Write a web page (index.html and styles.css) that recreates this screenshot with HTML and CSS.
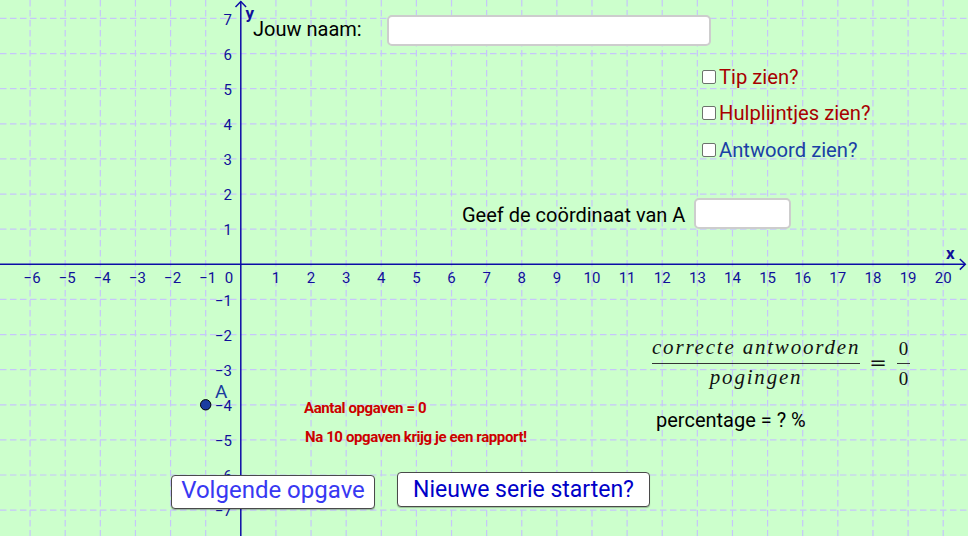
FILE: index.html
```html
<!DOCTYPE html>
<html lang="nl">
<head>
<meta charset="utf-8">
<title>Coördinaten</title>
<link rel="stylesheet" href="styles.css">
</head>
<body>
<div class="applet">
  <svg class="plane" width="968" height="536" viewBox="0 0 968 536" xmlns="http://www.w3.org/2000/svg">
    <g class="grid">
      <line x1="30.08" y1="0" x2="30.08" y2="536"/>
      <line x1="65.2" y1="0" x2="65.2" y2="536"/>
      <line x1="100.32" y1="0" x2="100.32" y2="536"/>
      <line x1="135.44" y1="0" x2="135.44" y2="536"/>
      <line x1="170.56" y1="0" x2="170.56" y2="536"/>
      <line x1="205.68" y1="0" x2="205.68" y2="536"/>
      <line x1="275.92" y1="0" x2="275.92" y2="536"/>
      <line x1="311.04" y1="0" x2="311.04" y2="536"/>
      <line x1="346.16" y1="0" x2="346.16" y2="536"/>
      <line x1="381.28" y1="0" x2="381.28" y2="536"/>
      <line x1="416.4" y1="0" x2="416.4" y2="536"/>
      <line x1="451.52" y1="0" x2="451.52" y2="536"/>
      <line x1="486.64" y1="0" x2="486.64" y2="536"/>
      <line x1="521.76" y1="0" x2="521.76" y2="536"/>
      <line x1="556.88" y1="0" x2="556.88" y2="536"/>
      <line x1="592" y1="0" x2="592" y2="536"/>
      <line x1="627.12" y1="0" x2="627.12" y2="536"/>
      <line x1="662.24" y1="0" x2="662.24" y2="536"/>
      <line x1="697.36" y1="0" x2="697.36" y2="536"/>
      <line x1="732.48" y1="0" x2="732.48" y2="536"/>
      <line x1="767.6" y1="0" x2="767.6" y2="536"/>
      <line x1="802.72" y1="0" x2="802.72" y2="536"/>
      <line x1="837.84" y1="0" x2="837.84" y2="536"/>
      <line x1="872.96" y1="0" x2="872.96" y2="536"/>
      <line x1="908.08" y1="0" x2="908.08" y2="536"/>
      <line x1="943.2" y1="0" x2="943.2" y2="536"/>
      <line x1="0" y1="18.46" x2="968" y2="18.46"/>
      <line x1="0" y1="53.58" x2="968" y2="53.58"/>
      <line x1="0" y1="88.7" x2="968" y2="88.7"/>
      <line x1="0" y1="123.82" x2="968" y2="123.82"/>
      <line x1="0" y1="158.94" x2="968" y2="158.94"/>
      <line x1="0" y1="194.06" x2="968" y2="194.06"/>
      <line x1="0" y1="229.18" x2="968" y2="229.18"/>
      <line x1="0" y1="299.42" x2="968" y2="299.42"/>
      <line x1="0" y1="334.54" x2="968" y2="334.54"/>
      <line x1="0" y1="369.66" x2="968" y2="369.66"/>
      <line x1="0" y1="404.78" x2="968" y2="404.78"/>
      <line x1="0" y1="439.9" x2="968" y2="439.9"/>
      <line x1="0" y1="475.02" x2="968" y2="475.02"/>
      <line x1="0" y1="510.14" x2="968" y2="510.14"/>
    </g>
    <g class="axes">
      <line x1="0" y1="264.3" x2="965" y2="264.3"/>
      <line x1="240.8" y1="536" x2="240.8" y2="1.5"/>
      <polyline points="959.8,259 965.3,264.3 959.8,269.6"/>
      <polyline points="235.5,7 240.8,1.5 246.1,7"/>
    </g>
    <g class="ticks-x">
      <text x="32.1" y="283">−6</text>
      <text x="67.2" y="283">−5</text>
      <text x="102.3" y="283">−4</text>
      <text x="137.4" y="283">−3</text>
      <text x="172.6" y="283">−2</text>
      <text x="207.7" y="283">−1</text>
      <text x="229" y="283">0</text>
      <text x="275.9" y="283">1</text>
      <text x="311" y="283">2</text>
      <text x="346.2" y="283">3</text>
      <text x="381.3" y="283">4</text>
      <text x="416.4" y="283">5</text>
      <text x="451.5" y="283">6</text>
      <text x="486.6" y="283">7</text>
      <text x="521.8" y="283">8</text>
      <text x="556.9" y="283">9</text>
      <text x="592" y="283">10</text>
      <text x="627.1" y="283">11</text>
      <text x="662.2" y="283">12</text>
      <text x="697.4" y="283">13</text>
      <text x="732.5" y="283">14</text>
      <text x="767.6" y="283">15</text>
      <text x="802.7" y="283">16</text>
      <text x="837.8" y="283">17</text>
      <text x="873" y="283">18</text>
      <text x="908.1" y="283">19</text>
      <text x="943.2" y="283">20</text>
    </g>
    <g class="ticks-y">
      <text x="232" y="24.5">7</text>
      <text x="232" y="59.6">6</text>
      <text x="232" y="94.7">5</text>
      <text x="232" y="129.8">4</text>
      <text x="232" y="164.9">3</text>
      <text x="232" y="200.1">2</text>
      <text x="232" y="235.2">1</text>
      <text x="232" y="305.6">−1</text>
      <text x="232" y="340.7">−2</text>
      <text x="232" y="375.8">−3</text>
      <text x="232" y="411">−4</text>
      <text x="232" y="446.1">−5</text>
      <text x="232" y="481.2">−6</text>
      <text x="232" y="516.3">−7</text>
    </g>
    <text class="axis-name" x="245.5" y="19">y</text>
    <text class="axis-name" x="946" y="259">x</text>
    <circle class="point" cx="205.68" cy="404.78" r="5.2"/>
  </svg>

  <span class="point-label">A</span>

  <label class="field-label name-label" for="naam">Jouw naam:</label>
  <input class="field name-field" id="naam" type="text">

  <div class="options">
    <label class="option tip"><span class="box"></span>Tip zien?</label>
    <label class="option hulp"><span class="box"></span>Hulplijntjes zien?</label>
    <label class="option answer"><span class="box"></span>Antwoord zien?</label>
  </div>

  <label class="field-label coord-label" for="coord">Geef de coördinaat van A</label>
  <input class="field coord-field" id="coord" type="text">

  <div class="formula">
    <div class="frac">
      <span class="num">correcte antwoorden</span>
      <span class="den">pogingen</span>
    </div>
    <span class="eq">=</span>
    <div class="frac small">
      <span class="num">0</span>
      <span class="den">0</span>
    </div>
  </div>

  <p class="percentage">percentage = ? %</p>

  <p class="note count">Aantal opgaven = 0</p>
  <p class="note report">Na 10 opgaven krijg je een rapport!</p>

  <button class="btn next" type="button">Volgende opgave</button>
  <button class="btn restart" type="button">Nieuwe serie starten?</button>
</div>
</body>
</html>
```

FILE: styles.css
```css
html, body {
  margin: 0;
  padding: 0;
  background: #ccffcc;
}

.applet {
  position: relative;
  width: 968px;
  height: 536px;
  overflow: hidden;
  background: #ccffcc;
  font-family: Roboto, "Noto Sans", sans-serif;
  color: #000;
}

.plane {
  display: block;
}

.grid line {
  stroke: #c6c6fa;
  stroke-width: 1.2;
  stroke-dasharray: 6.5 3.5;
}

.axes line,
.axes polyline {
  stroke: #0c0ca6;
  stroke-width: 1.5;
  fill: none;
}

.ticks-x text,
.ticks-y text {
  font-family: Roboto, sans-serif;
  font-size: 15px;
  fill: #10109a;
}

.ticks-x text {
  text-anchor: middle;
}

.ticks-y text {
  text-anchor: end;
}

.axis-name {
  font-family: Roboto, sans-serif;
  font-size: 17px;
  font-weight: bold;
  fill: #10109a;
}

.point {
  fill: #1a3ca0;
  stroke: #000;
  stroke-width: 1;
}

.point-label {
  position: absolute;
  left: 215px;
  top: 382px;
  font-size: 19px;
  line-height: 1;
  color: #1a3c9e;
}

.field-label {
  position: absolute;
  font-size: 20px;
  line-height: 1;
  color: #000;
}

.name-label {
  left: 253px;
  top: 19px;
}

.coord-label {
  left: 462px;
  top: 205px;
}

.field {
  position: absolute;
  box-sizing: border-box;
  height: 31px;
  margin: 0;
  padding: 0 6px;
  border: 2px solid #cdcdcd;
  border-radius: 5px;
  background: #fff;
  font: 18px Roboto, sans-serif;
  outline: none;
}

.name-field {
  left: 387px;
  top: 15px;
  width: 324px;
}

.coord-field {
  left: 694px;
  top: 198px;
  width: 97px;
}

.options {
  position: absolute;
  left: 702px;
  top: 67px;
  display: flex;
  flex-direction: column;
  gap: 16.3px;
}

.option {
  display: flex;
  align-items: center;
  gap: 3px;
  height: 20px;
  font-size: 20.2px;
  line-height: 1;
}

.option .box {
  box-sizing: border-box;
  width: 14px;
  height: 14px;
  border: 1.5px solid #6c736c;
  border-radius: 2px;
  background: #fff;
}

.tip,
.hulp {
  color: #a80000;
}

.answer {
  color: #1a40a6;
}

.formula {
  position: absolute;
  left: 652px;
  top: 337px;
  display: flex;
  align-items: flex-start;
  color: #111;
}

.frac {
  display: flex;
  flex-direction: column;
  align-items: center;
  font-family: "Liberation Serif", serif;
  font-style: italic;
  font-size: 21px;
}

.frac .num {
  line-height: 20px;
  padding-bottom: 5.5px;
  border-bottom: 1.3px solid #333;
  letter-spacing: 1.8px;
  white-space: nowrap;
}

.frac .den {
  line-height: 20px;
  margin-top: 3px;
  letter-spacing: 1.8px;
}

.eq {
  font-family: "DejaVu Serif", serif;
  font-size: 21px;
  line-height: 20px;
  margin: 16px 10px 0 9px;
}

.frac.small {
  font-style: normal;
  font-size: 19px;
}

.frac.small .num {
  padding: 1.5px 2px 4px;
  letter-spacing: 0;
}

.frac.small .den {
  margin-top: 5px;
  letter-spacing: 0;
}

.percentage {
  position: absolute;
  left: 656px;
  top: 410px;
  margin: 0;
  font-size: 20px;
  line-height: 1;
}

.note {
  position: absolute;
  margin: 0;
  font-size: 15px;
  font-weight: bold;
  line-height: 1;
  letter-spacing: -0.4px;
  color: #cc0000;
}

.count {
  left: 304px;
  top: 401px;
}

.report {
  left: 305px;
  top: 430px;
}

.btn {
  position: absolute;
  box-sizing: border-box;
  margin: 0;
  display: flex;
  align-items: center;
  justify-content: center;
  background: #fff;
  border: 1.5px solid #4a4a4a;
  border-radius: 4px;
  box-shadow: 0 1px 1px rgba(0, 0, 0, 0.25);
  font-family: Roboto, sans-serif;
  line-height: 1;
  cursor: pointer;
}

.next {
  left: 171px;
  top: 475px;
  width: 204px;
  height: 34px;
  padding: 0 0 4px;
  font-size: 24px;
  color: #3838f2;
}

.restart {
  left: 397px;
  top: 472px;
  width: 253px;
  height: 35px;
  padding: 0 0 1px;
  font-size: 23px;
  color: #0000c8;
}
```
